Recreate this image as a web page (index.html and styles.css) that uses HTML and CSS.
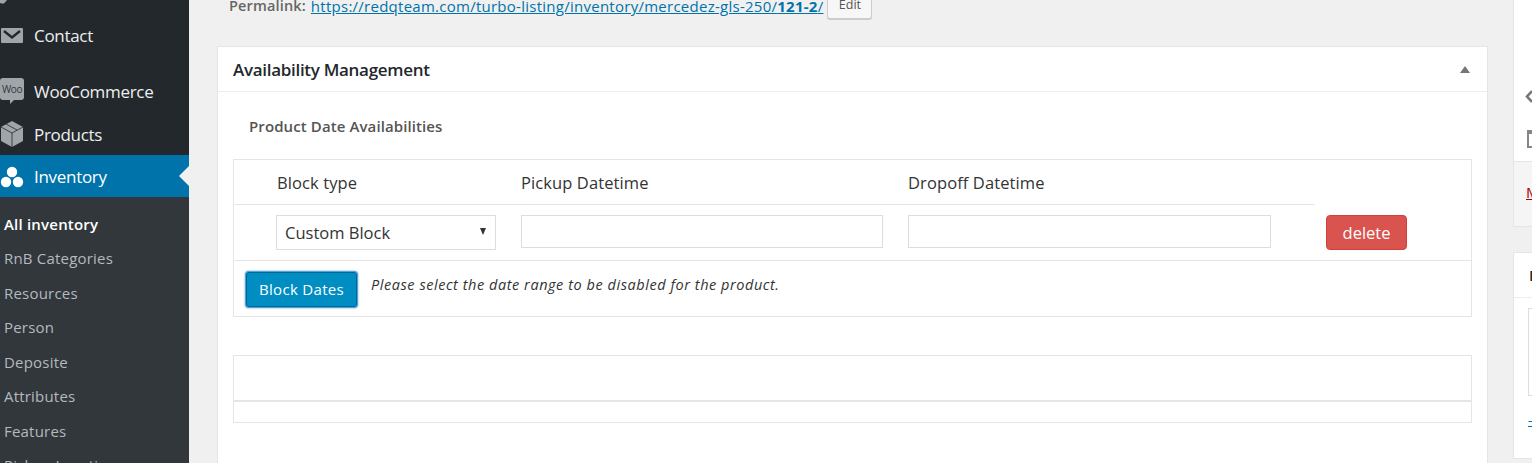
FILE: index.html
```html
<!DOCTYPE html>
<html lang="en">
<head>
<meta charset="utf-8">
<title>Edit inventory</title>
<link rel="stylesheet" href="styles.css">
</head>
<body>
<div class="page">
  <aside class="sidebar">
    <nav class="menu">
      <svg class="menu-stub" viewBox="0 0 10 14"><path fill="#a0a5aa" d="M0 0h7L4 3.500H1.500L0 3z"/></svg>
      <a class="item item-contact">
        <svg class="icon" viewBox="0 0 24 24"><path fill="#a0a5aa" d="M2 5h20a1 1 0 0 1 1 1v13a1 1 0 0 1-1 1H2a1 1 0 0 1-1-1V6a1 1 0 0 1 1-1z"/><path fill="none" stroke="#23282d" stroke-width="2.400" d="M4 8l8 6.500L20 8"/></svg>
        <span>Contact</span>
      </a>
      <a class="item item-woo">
        <span class="woo"><span class="woo-text">Woo</span></span>
        <span>WooCommerce</span>
      </a>
      <a class="item item-products">
        <svg class="icon icon-box" viewBox="0 0 24 26"><path fill="#a0a5aa" d="M12 0l11 6v14l-11 6-11-6V6z"/><path fill="none" stroke="#23282d" stroke-width=".8" d="M1 6l11 6 11-6M12 12v14M6 3l11 6"/></svg>
        <span>Products</span>
      </a>
      <a class="item item-current">
        <svg class="icon" viewBox="0 0 24 24"><circle cx="12" cy="8" r="5.200" fill="#fff"/><circle cx="6" cy="18" r="5.200" fill="#fff"/><circle cx="18" cy="18" r="5.200" fill="#fff"/></svg>
        <span>Inventory</span>
      </a>
    </nav>
    <ul class="submenu">
      <li class="sub-current">All inventory</li>
      <li>RnB Categories</li>
      <li>Resources</li>
      <li>Person</li>
      <li>Deposite</li>
      <li>Attributes</li>
      <li>Features</li>
      <li>Pickup Locations</li>
    </ul>
  </aside>

  <main class="main">
    <div class="permalink">
      <strong class="permalink-label">Permalink:</strong>
      <a class="permalink-url">https://redqteam.com/turbo-listing/inventory/mercedez-gls-250/<b>121-2</b>/</a>
      <button class="edit-btn" type="button">Edit</button>
    </div>

    <section class="panel">
      <header class="panel-head">
        <h2>Availability Management</h2>
        <span class="caret"></span>
      </header>
      <div class="panel-body">
        <h4 class="section-title">Product Date Availabilities</h4>

        <div class="box">
          <div class="grid grid-head">
            <span>Block type</span>
            <span>Pickup Datetime</span>
            <span>Dropoff Datetime</span>
          </div>
          <div class="grid grid-row">
            <div class="select"><span>Custom Block</span><i class="select-arrow"></i></div>
            <div class="field field-pickup"></div>
            <div class="field"></div>
            <button class="delete-btn" type="button">delete</button>
          </div>
          <div class="box-foot">
            <button class="block-btn" type="button">Block Dates</button>
            <em>Please select the date range to be disabled for the product.</em>
          </div>
        </div>

        <div class="box box-empty">
          <div class="empty-top"></div>
          <div class="empty-bottom"></div>
        </div>
      </div>
    </section>
  </main>

  <aside class="side">
    <div class="side-card">
      <div class="side-top">
        <svg class="side-chevron" viewBox="0 0 8 13"><path fill="none" stroke="#72777c" stroke-width="2.600" d="M7 1L2 6.500 7 12"/></svg>
        <svg class="side-cal" viewBox="0 0 6 19"><path fill="#82878c" d="M0 1h6v18H0z"/><path fill="#fff" d="M2 5h4v12H2z"/></svg>
      </div>
      <div class="side-bottom"><a class="side-link">Move</a></div>
    </div>
    <div class="side-card side-card-2">
      <div class="side-title"><span>P</span></div>
      <div class="side-inner"></div>
      <a class="side-small">—</a>
    </div>
  </aside>
</div>
</body>
</html>
```
FILE: styles.css
```css
* { box-sizing: border-box; }
html, body { margin: 0; padding: 0; height: 463px; overflow: hidden; background: #f0f0f0; }
body { font-family: "Open Sans", "Noto Sans", sans-serif; color: #444; }

.page { display: flex; width: 1532px; height: 463px; overflow: hidden; }

/* Sidebar */
.sidebar { flex: 0 0 189px; background: #23282d; color: #eee; height: 463px; overflow: hidden; }
.menu { display: flex; flex-direction: column; }
.menu-stub { display: block; width: 10px; height: 14px; }
.item { display: flex; align-items: center; gap: 10px; height: 42px; font-size: 17px; letter-spacing: -.3px; color: #eee; }
.item-contact { margin-bottom: 14px; }
.item-woo { height: 43px; }
.item-current { background: #0073aa; color: #fff; position: relative; }
.item-current::after { content: ""; position: absolute; right: 0; top: 11px; border: 10px solid transparent; border-left-width: 0; border-right: 10px solid #f1f1f1; }
.icon { width: 24px; height: 24px; flex: none; }
.icon-box { height: 26px; }
.woo { width: 24px; height: 22px; margin-top: -5px; flex: none; background: #a0a5aa; border-radius: 3px; display: flex; align-items: center; justify-content: center; position: relative; }
.woo::after { content: ""; position: absolute; left: 10px; bottom: -4px; border: 2px solid transparent; border-top: 2px solid #a0a5aa; border-left: 2px solid #a0a5aa; }
.woo-text { font-size: 10px; color: #32373c; letter-spacing: -.4px; line-height: 1; }

.submenu { list-style: none; margin: 0; padding: 9.700px 0 0 4px; background: #32373c; height: 266px; }
.submenu li { height: 34.500px; line-height: 34.500px; font-size: 15px; letter-spacing: .2px; color: #b4b9be; white-space: nowrap; }
.submenu .sub-current { color: #fff; font-weight: 600; }

/* Main column */
.main { flex: 0 0 1299px; padding: 0 0 0 28px; overflow: hidden; }
.permalink { display: flex; align-items: flex-start; padding-left: 12px; font-size: 14.500px; line-height: 20px; margin-top: -4px; height: 50px; }
.permalink-label { font-weight: 600; color: #666; margin-right: 5px; letter-spacing: .15px; }
.permalink-url { color: #0073aa; text-decoration: underline; font-size: 15px; letter-spacing: .26px; white-space: nowrap; }
.permalink-url b { font-weight: 700; }
.edit-btn { margin: -6px 0 0 4px; height: 29px; width: 45px; padding: 0; font: 12.500px "Open Sans", sans-serif; color: #555; background: #f7f7f7; border: 1px solid #ccc; border-radius: 3px; box-shadow: 0 1px 0 #ccc; }

.panel { width: 1271px; height: 440px; background: #fff; border: 1px solid #e5e5e5; }
.panel-head { height: 45px; display: flex; align-items: center; justify-content: space-between; padding: 0 17px 0 15px; border-bottom: 1px solid #eee; }
.panel-head h2 { margin: 0; font-size: 17px; font-weight: 600; letter-spacing: -.3px; color: #23282d; }
.caret { width: 0; height: 0; border: 5px solid transparent; border-top-width: 0; border-bottom: 7px solid #72777c; }

.panel-body { padding: 0 15px; }
.section-title { margin: 0; padding: 24px 0 0 16px; height: 67px; font-size: 15px; font-weight: 600; letter-spacing: .1px; line-height: 20px; color: #555; }

.box { border: 1px solid #e5e5e5; }
.grid { display: grid; grid-template-columns: 245px 387px 418px 1fr; padding-left: 42px; align-items: start; }
.grid-head { width: 1081px; height: 45px; border-bottom: 1px solid #e5e5e5; font-size: 16.500px; letter-spacing: .1px; color: #333; line-height: 46px; padding-left: 43px; grid-template-columns: 244px 387px 1fr; }
.grid-row { height: 56px; padding-top: 10px; border-bottom: 1px solid #e5e5e5; }
.select { width: 220px; height: 35px; border: 1px solid #ddd; display: flex; align-items: center; justify-content: space-between; padding: 0 9px 0 8px; font-size: 16.500px; color: #333; background: #fff; }
.select-arrow { width: 0; height: 0; border: 3.500px solid transparent; border-bottom-width: 0; border-top: 7px solid #333; margin-top: -3px; }
.field { width: 363px; height: 33px; border: 1px solid #ddd; background: #fff; }
.field-pickup { width: 362px; }
.delete-btn { width: 81px; height: 35px; padding: 0; border: 1px solid #d43f3a; border-radius: 4px; background: #d9534f; color: #fff; font: 16.500px "Open Sans", sans-serif; }
.box-foot { height: 55px; display: flex; align-items: center; padding: 0 0 0 12px; gap: 14px; }
.block-btn { width: 111px; height: 35px; margin-top: 1px; padding: 0; border: 1px solid #006799; border-radius: 3px; background: #008ec2; color: #fff; font: 15px "Open Sans", sans-serif; letter-spacing: .3px; box-shadow: 0 0 0 1px #5b9dd9, 0 0 2px 1px rgba(30,140,190,.8); }
.box-foot em { font-size: 14.500px; letter-spacing: .55px; color: #333; margin-top: -9px; white-space: nowrap; }

.box-empty { margin-top: 38px; height: 68px; }
.empty-top { height: 46px; border-bottom: 2px solid #e5e5e5; }

/* Right column */
.side { flex: 0 0 44px; padding-left: 25px; overflow: hidden; }
.side-card { width: 300px; background: #fff; border: 1px solid #e5e5e5; height: 227px; border-top: 0; }
.side-top { height: 162px; padding: 90px 0 0 11px; border-bottom: 1px solid #e5e5e5; }
.side-chevron { display: block; width: 8px; height: 13px; }
.side-cal { display: block; width: 6px; height: 19px; margin: 26px 0 0 2px; }
.side-bottom { height: 64px; background: #f5f5f5; padding: 20px 0 0 12px; font-size: 15px; line-height: 20px; }
.side-link { color: #a00; text-decoration: underline; }
.side-card-2 { margin-top: 25px; height: 207px; border-top: 1px solid #e5e5e5; }
.side-title { height: 45px; border-bottom: 1px solid #eee; padding: 12px 0 0 15px; color: #23282d; font-weight: 600; font-size: 15px; }
.side-inner { width: 280px; height: 88px; margin: 10px 0 0 14px; border: 1px solid #ddd; }
.side-small { display: block; margin: 18px 0 0 14px; color: #0073aa; font-size: 12px; line-height: 14px; text-decoration: underline; }
```
